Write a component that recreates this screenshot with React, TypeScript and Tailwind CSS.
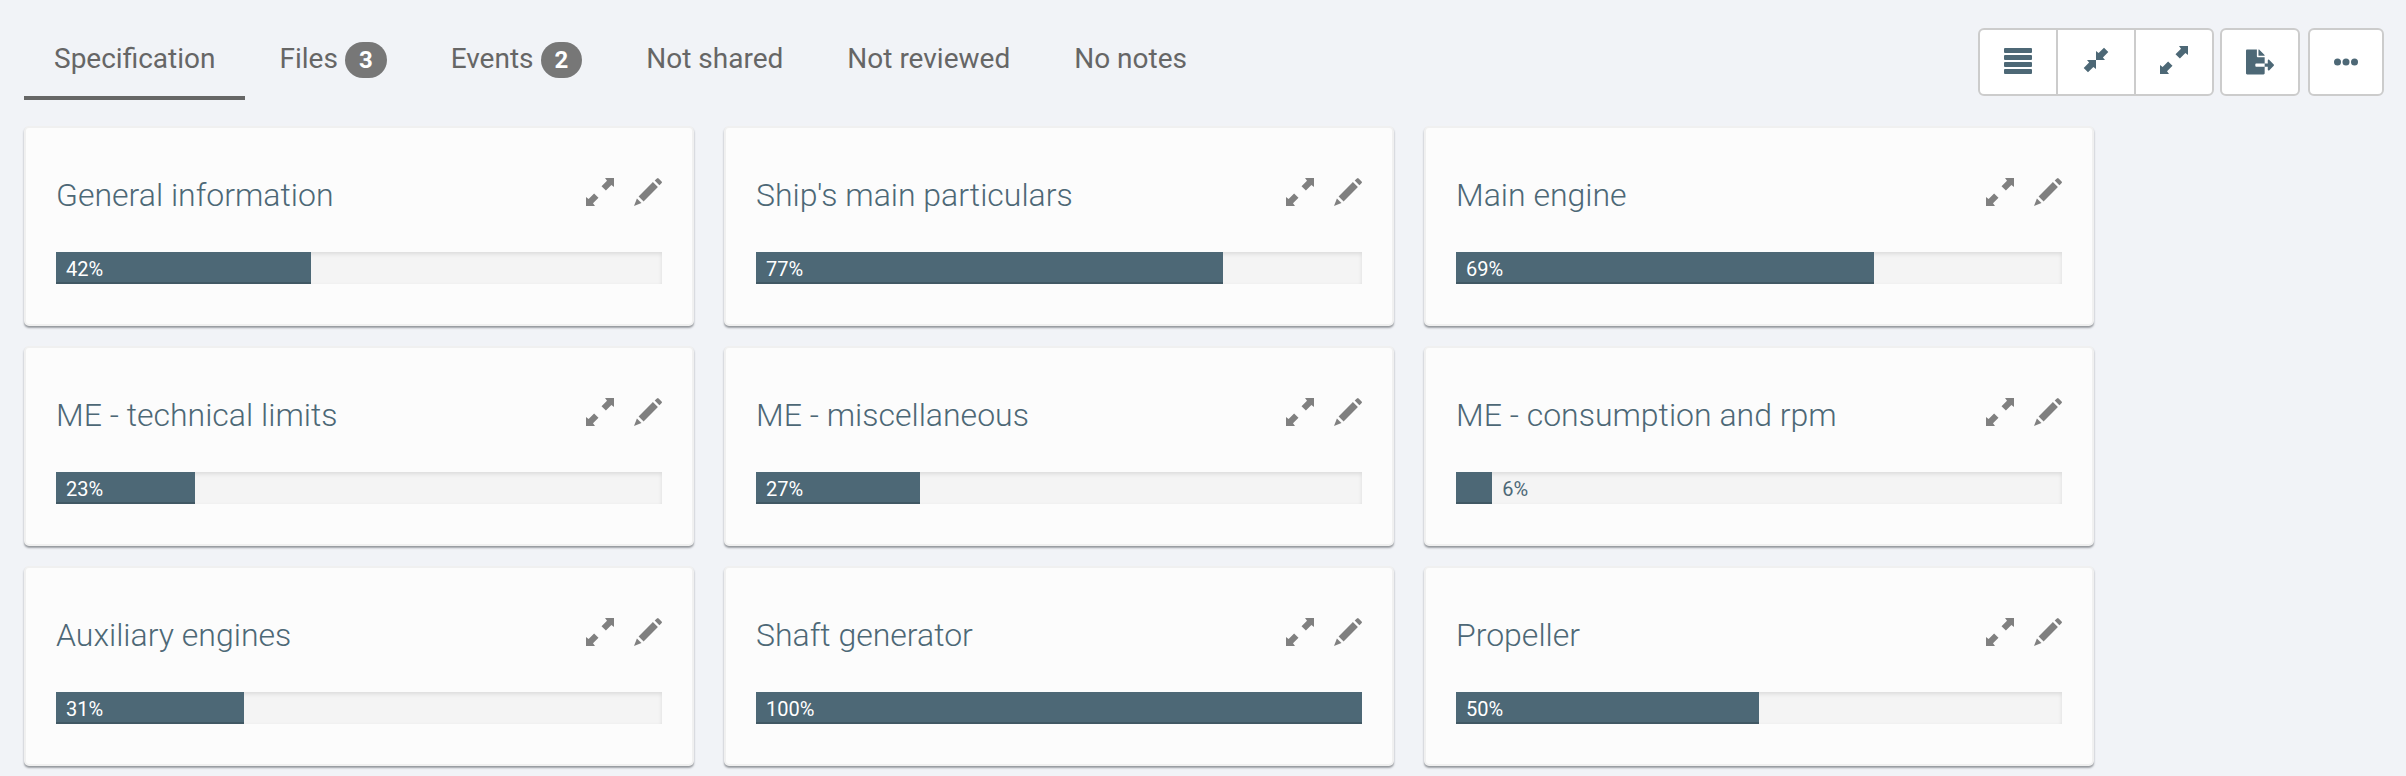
import type { ReactNode } from "react";
import { FaFileExport } from "react-icons/fa";

const sections = [
  { title: "General information", percent: 42 },
  { title: "Ship's main particulars", percent: 77 },
  { title: "Main engine", percent: 69 },
  { title: "ME - technical limits", percent: 23 },
  { title: "ME - miscellaneous", percent: 27 },
  { title: "ME - consumption and rpm", percent: 6 },
  { title: "Auxiliary engines", percent: 31 },
  { title: "Shaft generator", percent: 100 },
  { title: "Propeller", percent: 50 },
];

const tabs: { label: string; count?: number }[] = [
  { label: "Specification" },
  { label: "Files", count: 3 },
  { label: "Events", count: 2 },
  { label: "Not shared" },
  { label: "Not reviewed" },
  { label: "No notes" },
];

function ExpandIcon() {
  return (
    <svg viewBox="0 0 28 28" className="size-7" fill="currentColor" aria-hidden="true">
      <path d="M19 0H28V9L25.4 7.1L19.9 12.6L15.5 8.2L21 2.7Z" />
      <path d="M9 28H0V19L2.6 20.9L8.1 15.4L12.5 19.8L7 25.3Z" />
    </svg>
  );
}

function CompressIcon() {
  return (
    <svg viewBox="0 0 28 28" className="size-7" fill="currentColor" aria-hidden="true">
      <path d="M14 14V5L16.6 7.1L22 1.7L26.3 6L20.9 11.4L23 14Z" />
      <path d="M14 14V23L11.4 20.9L6 26.3L1.7 22L7.1 16.6L5 14Z" />
    </svg>
  );
}

function PencilIcon() {
  return (
    <svg viewBox="0 0 28 28" className="size-7" fill="currentColor" aria-hidden="true">
      <path d="M22.3 1L23 .4Q23.8 -.3 24.6 .4L27.6 3.4Q28.4 4.2 27.6 5L27 5.7L25.4 7.3L20.7 2.6Z" />
      <path d="M18.9 4.1L23.9 9.1L9.6 23.4L4.6 18.4Z" />
      <path d="M2.9 20.5L7.5 25.1L0 28Z" />
    </svg>
  );
}

function ListIcon() {
  return (
    <svg viewBox="0 0 28 26" className="h-[26px] w-7" fill="currentColor" aria-hidden="true">
      <rect width="28" height="5" rx="1" />
      <rect y="7" width="28" height="5" rx="1" />
      <rect y="14" width="28" height="5" rx="1" />
      <rect y="21" width="28" height="5" rx="1" />
    </svg>
  );
}

function MoreIcon() {
  return (
    <svg viewBox="0 0 24 8" className="h-2 w-6" fill="currentColor" aria-hidden="true">
      <circle cx="3.5" cy="4" r="3.5" />
      <circle cx="12" cy="4" r="3.5" />
      <circle cx="20.5" cy="4" r="3.5" />
    </svg>
  );
}

function ToolButton({ label, className, children }: { label: string; className: string; children: ReactNode }) {
  return (
    <button
      type="button"
      aria-label={label}
      className={`flex h-[68px] items-center justify-center border-2 border-[#ccc] bg-white ${className}`}
    >
      {children}
    </button>
  );
}

function SectionCard({ title, percent }: { title: string; percent: number }) {
  const small = percent < 10;
  return (
    <section className="rounded-[5px] border-2 border-[#f0f0f0] bg-[#fcfcfc] px-[30px] pt-12 pb-10 shadow-[0_2px_2px_rgba(60,64,72,0.45),0_1px_1px_rgba(60,64,72,0.1)]">
      <div className="flex h-10 items-start justify-between">
        <h2 className="text-[32px] leading-[38px] font-light whitespace-nowrap text-[#4d6876]">{title}</h2>
        <div className="flex gap-5 pt-0.5 text-[#808080]">
          <button type="button" aria-label={`Expand ${title}`}>
            <ExpandIcon />
          </button>
          <button type="button" aria-label={`Edit ${title}`}>
            <PencilIcon />
          </button>
        </div>
      </div>
      <div
        role="progressbar"
        aria-label={title}
        aria-valuenow={percent}
        aria-valuemin={0}
        aria-valuemax={100}
        className="mt-9 flex h-8 bg-[#f4f4f4] text-xl leading-[34px] shadow-[inset_0_2px_4px_rgba(0,0,0,0.1)]"
      >
        <div
          className="bg-[#4d6876] pl-[10px] text-white shadow-[inset_0_-2px_0_rgba(0,0,0,0.15)]"
          style={{ width: `${percent}%` }}
        >
          {small ? null : `${percent}%`}
        </div>
        {small && <span className="pl-[10px] text-[#4d6876]">{percent}%</span>}
      </div>
    </section>
  );
}

export default function App() {
  return (
    <div className="min-h-screen bg-[#f1f3f7] font-['Roboto',sans-serif]">
      <header className="flex justify-between pr-[22px] pl-6">
        <nav className="flex gap-1 pt-4" aria-label="Sections">
          {tabs.map((tab, i) => (
            <a
              key={tab.label}
              href="#"
              aria-current={i === 0 ? "page" : undefined}
              className={`flex h-[84px] items-start gap-[7px] border-b-4 px-[30px] pt-[26px] text-[28px] leading-[34px] font-normal whitespace-nowrap text-[#666] ${i === 0 ? "border-[#666]" : "border-transparent"}`}
            >
              <span>{tab.label}</span>
              {tab.count !== undefined && (
                <span className="h-9 rounded-[20px] bg-[#777] px-[14px] text-2xl leading-9 font-bold text-white">
                  {tab.count}
                </span>
              )}
            </a>
          ))}
        </nav>
        <div className="flex pt-7 text-[#4d6876]">
          <div className="flex">
            <ToolButton label="List view" className="w-20 rounded-l-md pb-0.5">
              <ListIcon />
            </ToolButton>
            <ToolButton label="Collapse all" className="-ml-0.5 w-20 pb-1">
              <CompressIcon />
            </ToolButton>
            <ToolButton label="Expand all" className="-ml-0.5 w-20 rounded-r-md pb-1">
              <ExpandIcon />
            </ToolButton>
          </div>
          <ToolButton label="Export" className="ml-1.5 w-20 rounded-md">
            <FaFileExport className="size-7" />
          </ToolButton>
          <ToolButton label="More" className="ml-2 w-[76px] rounded-md">
            <MoreIcon />
          </ToolButton>
        </div>
      </header>
      <main className="grid max-w-[2118px] grid-cols-3 gap-x-[30px] gap-y-5 px-6 pt-[26px] pb-2">
        {sections.map((section) => (
          <SectionCard key={section.title} {...section} />
        ))}
      </main>
    </div>
  );
}
